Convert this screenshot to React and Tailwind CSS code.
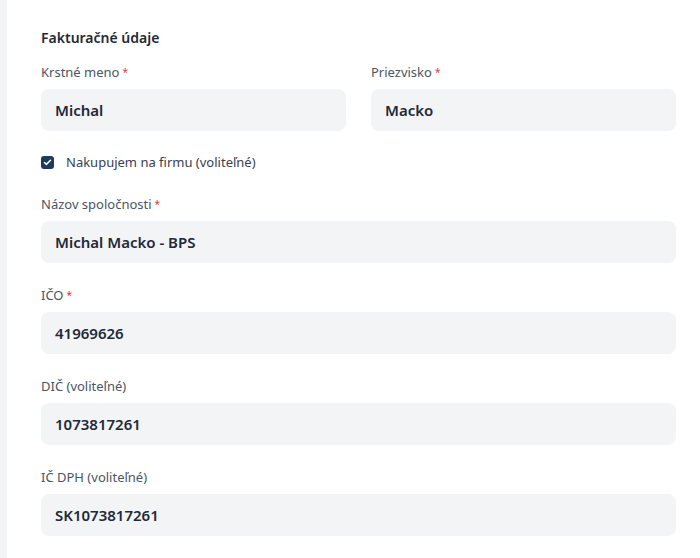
import { Check } from 'lucide-react';

const Field = ({ label, required, value }) => (
  <div>
    <label className="block text-[13px] leading-4 text-gray-600 mb-[9px]">
      {label}
      {required && <span className="text-red-500 ml-[3px] text-[10px] align-top">*</span>}
    </label>
    <div className="h-[42px] rounded-lg bg-[#f3f4f6] px-[14px] flex items-center text-[15px] font-semibold text-gray-800">
      {value}
    </div>
  </div>
);

const App = () => {
  return (
    <div
      className="min-h-[558px] bg-[#f3f4f6] pl-[7px]"
      style={{ fontFamily: '"Noto Sans", Lato, sans-serif' }}
    >
      <div className="min-h-[558px] bg-white pl-[34px] pr-6 pt-[28px]">
        <h2 className="text-[14px] leading-5 font-semibold text-gray-800 mb-[16px]">Fakturačné údaje</h2>

        <div className="grid grid-cols-2 gap-[25px]">
          <Field label="Krstné meno" required value="Michal" />
          <Field label="Priezvisko" required value="Macko" />
        </div>

        <label className="flex items-center gap-3 mt-[23px] mb-[26px]">
          <span className="w-[13px] h-[13px] rounded-[3px] bg-[#1e3a5f] flex items-center justify-center">
            <Check className="w-[9px] h-[9px] text-white" strokeWidth={4} />
          </span>
          <span className="text-[13px] leading-4 text-gray-700">Nakupujem na firmu (voliteľné)</span>
        </label>

        <div className="flex flex-col gap-[24px]">
          <Field label="Názov spoločnosti" required value="Michal Macko - BPS" />
          <Field label="IČO" required value="41969626" />
          <Field label="DIČ (voliteľné)" value="1073817261" />
          <Field label="IČ DPH (voliteľné)" value="SK1073817261" />
        </div>
      </div>
    </div>
  );
};

export default App;
